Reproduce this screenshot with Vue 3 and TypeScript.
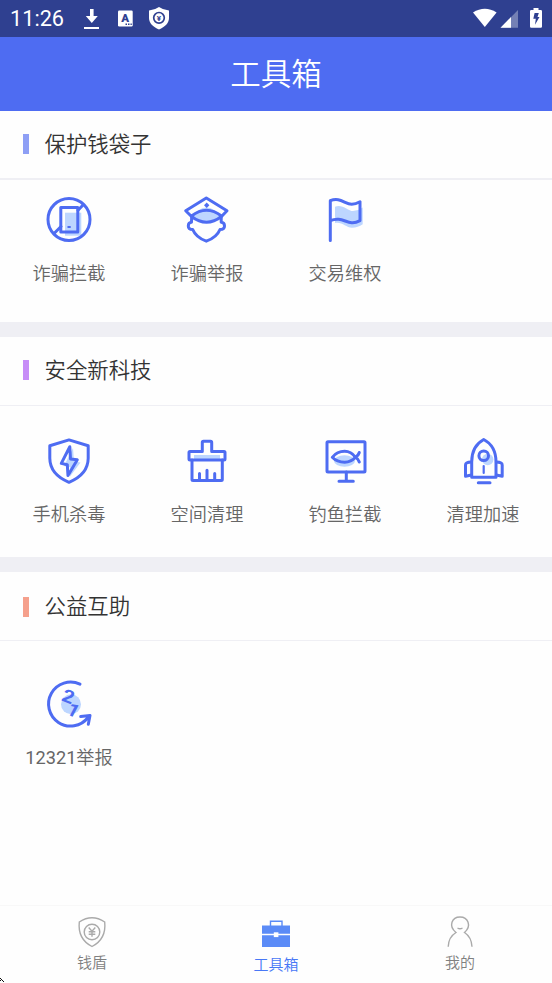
<script setup lang="ts">
interface Tool {
  icon: string
  label: string
  code?: string
}
interface Section {
  key: string
  title: string
  tools: Tool[]
}

const sections: Section[] = [
  {
    key: 'wallet',
    title: '保护钱袋子',
    tools: [
      { icon: 'block', label: '诈骗拦截' },
      { icon: 'police', label: '诈骗举报' },
      { icon: 'flag', label: '交易维权' },
    ],
  },
  {
    key: 'tech',
    title: '安全新科技',
    tools: [
      { icon: 'virus', label: '手机杀毒' },
      { icon: 'brush', label: '空间清理' },
      { icon: 'fish', label: '钓鱼拦截' },
      { icon: 'rocket', label: '清理加速' },
    ],
  },
  {
    key: 'public',
    title: '公益互助',
    tools: [{ icon: 'report', code: '12321', label: '举报' }],
  },
]
</script>

<template>
  <div class="screen">
    <div class="status">
      <span class="clock">11:26</span>
      <svg class="status-left" width="90" height="37" viewBox="80 0 90 37">
        <path d="M90 9h3.600v7h4.200l-6 7-6-7h4.200z" fill="#fff" />
        <rect x="84" y="27" width="15" height="2" fill="#fff" />
        <rect x="118" y="10.500" width="14.700" height="16" rx="1.200" fill="#fff" />
        <text x="125.200" y="22.300" text-anchor="middle" class="glyph" font-size="11.500" fill="#2f4090">A</text>
        <path d="M125.500 24.300h1.500m1 0h1.500m1 0h1.300" stroke="#2f4090" stroke-width="1.400" />
        <path d="M159 7Q163.500 10.200 169 10.600V18C169 23 165 27 159 29.400C153 27 149 23 149 18V10.600Q154.500 10.200 159 7z" fill="#fff" />
        <circle cx="159" cy="17.800" r="5.300" fill="#fff" stroke="#2f4090" stroke-width="1.700" />
        <text x="159" y="20.700" text-anchor="middle" class="glyph yen" font-size="8" fill="#2f4090">¥</text>
      </svg>
      <svg class="status-right" width="82" height="37" viewBox="470 0 82 37">
        <path d="M473 12.500Q484.800 5 496.600 12.500L484.800 27z" fill="#fff" />
        <path d="M518 10v17.800h-17.500z" fill="#7480b5" />
        <path d="M511 17.100v10.700h-10.500z" fill="#fff" />
        <path d="M533.500 8h5v2h2.300q1.200 0 1.200 1.200v15.400q0 1.200-1.200 1.200h-9.600q-1.200 0-1.200-1.200v-15.400q0-1.200 1.200-1.200h2.300z" fill="#fff" />
        <path d="M534.600 13h4.200l-1.300 3.900h2l-4.500 7.800.8-5.900h-2.500z" fill="#2f4090" />
      </svg>
    </div>

    <header class="header"><h1>工具箱</h1></header>

    <main>
      <section v-for="s in sections" :key="s.key" class="section" :class="s.key">
        <h2><i class="mark"></i><span>{{ s.title }}</span></h2>
        <div class="grid">
          <div v-for="t in s.tools" :key="t.icon" class="tool">
            <svg class="icon" viewBox="0 0 56 56">
              <g v-if="t.icon === 'block'">
                <rect class="tint" x="24" y="21.700" width="16.300" height="23" />
                <circle cx="28" cy="28.500" r="21" />
                <rect x="19.800" y="16.500" width="17" height="24.500" />
                <path d="M41.800 14.200L37 19.200M20 35.500L13.300 42.300" />
                <rect class="solid" x="26.500" y="35" width="3.200" height="2" />
              </g>
              <g v-else-if="t.icon === 'police'">
                <path class="tint" d="M13 25Q27.500 8 42 25Q27.500 36 13 25z" />
                <path d="M27.300 7L48 19.700L42.500 25.500Q27.500 37 12.500 25.500L6.700 19.700zM12.500 25Q27.500 13.500 42.500 25" />
                <path d="M12.700 25.500L12.500 31.300Q9.300 31.500 9.300 35Q9.300 38.500 13.700 38.500Q17 46.500 27.300 50.200Q37.700 46.500 41 38.500Q45.500 38.500 45.500 35Q45.500 31.500 42.200 31.300L42.200 25.500" />
                <path class="solid" d="M27.700 11.600L30.400 14.300L27.700 17L25 14.300z" />
              </g>
              <g v-else-if="t.icon === 'flag'">
                <path class="tint" d="M18 15.700C25 12.500 31 20 36 20Q41 20 45.700 16.500V33.300Q41 36.700 35 36.700C29 36.700 25 30.500 18 32z" />
                <path d="M13.300 49.500V9.700C23 5.500 28 13.300 34.700 13.300Q38.500 13.300 43 10.800V29.700Q38.500 32 34.700 31.700C28 31.300 23 25.500 13.300 29.700" />
              </g>
              <g v-else-if="t.icon === 'virus'">
                <path class="tint" d="M32 15L23 33l6 1v9.500L39.500 29.500l-6.500-1z" />
                <path d="M28 6.900L47.200 12.800V25.300Q47 41.500 28 49.300Q9 41.500 8.800 25.300V12.800z" />
                <path d="M28.800 13.800L20.300 30.400L26.300 31.700L27 42.600L36.300 26.800L29.500 26z" />
              </g>
              <g v-else-if="t.icon === 'brush'">
                <rect class="tint" x="15" y="22" width="26" height="4" />
                <path d="M23.300 18.500V9.500Q23.300 8.300 24.500 8.300H31.500Q32.700 8.300 32.700 9.500V18.500H45Q46 18.500 46 19.500V26Q46 27 45 27H11Q10 27 10 26V19.500Q10 18.500 11 18.500z" />
                <path d="M13 27V46.500Q13 47.500 14 47.500H42.300Q43.300 47.500 43.300 46.500V27M20.500 40.500V47M28 37.300V47M35.700 40.500V47" />
              </g>
              <g v-else-if="t.icon === 'fish'">
                <ellipse class="tint" cx="27.500" cy="28" rx="10.500" ry="5.800" />
                <rect x="10" y="8.700" width="38" height="30.300" rx="1" />
                <path d="M29.300 39V48M22 48.300H36.300M42.300 19.500Q41.500 22.500 38.500 24.300Q34 29.200 27.700 29.200Q20 29.200 15.300 24.300Q20 18.300 27.700 18.300Q34 18.300 38.500 24.300Q41.500 26 42.300 29" />
              </g>
              <g v-else-if="t.icon === 'rocket'">
                <circle class="tint" cx="32.700" cy="26.500" r="5.700" />
                <path d="M28.700 6.500Q41 13 41 29V44.300H16.700V29Q16.700 13 28.700 6.500zM23.300 49.700H35" />
                <path class="thin" d="M28.700 33V40" />
                <circle cx="28.700" cy="22.700" r="4.800" />
                <path d="M16.300 29Q10.500 29 10.500 32V43.300L16.500 42M41.300 29Q47.200 29 47.200 32V43.300L41.300 42" />
              </g>
              <g v-else>
                <circle class="tint" cx="30" cy="28.300" r="10" />
                <path d="M39 8.200A22 22 0 1 0 47 41.500M39.700 40.500L49 39.500L47.300 48.300" />
                <text class="digit" transform="translate(27.300 20.500) rotate(22) scale(1.150 1)" text-anchor="middle" y="6.200">2</text>
                <text class="digit" transform="translate(32.500 34.300) rotate(28) scale(1.150 1)" text-anchor="middle" y="6.200">1</text>
              </g>
            </svg>
            <span class="label"><b v-if="t.code">{{ t.code }}</b>{{ t.label }}</span>
          </div>
        </div>
      </section>
    </main>

    <nav class="tabs">
      <div class="tab">
        <svg width="40" height="40" viewBox="72 912 40 40">
          <path d="M92 917.700C96 917.700 101 919.500 104.700 922Q106.500 939 92 946.500Q77.500 939 79.300 922C83 919.500 88 917.700 92 917.700z" />
          <circle cx="92" cy="932" r="7.800" />
          <path d="M88.700 927.500L92 931.200L95.300 927.500M92 931.200V936.700M88.700 931.700H95.300M88.700 934.300H95.300" />
        </svg>
        <span>钱盾</span>
      </div>
      <div class="tab active">
        <svg width="40" height="40" viewBox="256 912 40 40">
          <path d="M270.500 926V921.300H282V926" />
          <path class="fill" d="M262 925.500h28v8.300h-28zM262 935.200h28v11.800h-28z" />
          <rect class="lock" x="273.800" y="932.300" width="4.600" height="4.800" />
        </svg>
        <span>工具箱</span>
      </div>
      <div class="tab">
        <svg width="40" height="40" viewBox="440 912 40 40">
          <path d="M448.200 946.800Q448.500 937 456 932.500C448 926 452 917 460 917S472 926 464.500 932.500Q471.500 937 472 946.800M457.500 928Q460 929.500 462.500 928" />
        </svg>
        <span>我的</span>
      </div>
      <svg class="cursor" width="5" height="6" viewBox="0 0 5 6"><path d="M0 1h1v1h-1zM1 2h1v1h-1zM2 3h1v1h-1zM0 3h1v1h-1zM3 4h1v1h-1z" fill="#111" /></svg>
    </nav>
  </div>
</template>

<style>
body {
  margin: 0;
  background: #fff;
}
</style>

<style scoped>
.screen {
  width: 552px;
  height: 983px;
  display: flex;
  flex-direction: column;
  overflow: hidden;
  background: #fefefe;
  font-family: Roboto, "Noto Sans CJK SC", sans-serif;
  font-weight: 350;
}
.status {
  height: 37px;
  flex: none;
  display: flex;
  background: #2f4090;
  color: #fff;
}
.clock {
  width: 70px;
  padding-left: 10px;
  font-size: 21.700px;
  line-height: 38px;
  font-weight: 400;
}
.status-right {
  margin-left: auto;
}
.glyph {
  font-family: Roboto, sans-serif;
  font-weight: 900;
}
.yen {
  font-weight: 700;
}
.header {
  height: 73.500px;
  flex: none;
  background: #4e6cf2;
  color: #fff;
  text-align: center;
}
h1 {
  margin: 0;
  font-size: 30.500px;
  line-height: 75px;
  font-weight: 350;
}
main {
  flex: 1;
}
.section {
  box-sizing: border-box;
  height: 226px;
  border-bottom: 15.500px solid #efeff4;
}
.tech {
  height: 235px;
}
.public {
  border-bottom: 0;
}
h2 {
  box-sizing: border-box;
  height: 69px;
  margin: 0;
  padding-left: 23px;
  display: flex;
  align-items: center;
  border-bottom: 2px solid #efeff4;
  color: #333;
  font-size: 21.400px;
  font-weight: 350;
  line-height: 32px;
}
.wallet h2 span {
  padding-top: 2px;
}
.tech h2,
.public h2 {
  border-bottom-width: 1px;
}
.tech .mark {
  margin-bottom: 1px;
}
.public h2 {
  padding-top: 2px;
}
.mark {
  width: 6px;
  height: 20px;
  margin-right: 15.500px;
  background: #8e9ff5;
}
.tech .mark {
  background: #c78df7;
}
.public .mark {
  background: #f5a08c;
}
.grid {
  display: grid;
  grid-template-columns: repeat(4, 138px);
  padding-top: 11.500px;
}
.tech .grid {
  padding-top: 27.500px;
}
.public .grid {
  padding-top: 35.500px;
}
.tool {
  display: flex;
  flex-direction: column;
  align-items: center;
  color: #666;
  font-size: 18.200px;
  line-height: 28px;
}
.label {
  margin-top: 12.500px;
}
.tech .label {
  margin-top: 12px;
}
.public .label {
  margin-top: 11.500px;
}
.label b {
  font-weight: 400;
}
.icon {
  width: 56px;
  height: 56px;
  fill: none;
  stroke: #4e6cf2;
  stroke-width: 3;
  stroke-linecap: round;
  stroke-linejoin: round;
}
.icon .tint {
  fill: #bdd6ff;
  stroke: none;
}
.icon .solid {
  fill: #4e6cf2;
  stroke: none;
}
.icon .thin {
  stroke-width: 2.200;
}
.digit {
  fill: #4e6cf2;
  stroke: none;
  font-family: Roboto, sans-serif;
  font-size: 18px;
  font-weight: 700;
}
.tabs {
  position: relative;
  height: 77px;
  flex: none;
  display: grid;
  grid-template-columns: repeat(3, 1fr);
  border-top: 1px solid #f8f8f8;
}
.tab {
  display: flex;
  flex-direction: column;
  align-items: center;
  padding-top: 6px;
  color: #808080;
  font-size: 15px;
  line-height: 22px;
}
.tab svg {
  fill: none;
  stroke: #aaa;
  stroke-width: 1.400;
}
.tab.active {
  color: #4878f6;
}
.tab.active svg {
  stroke: #5b8bf7;
}
.tab .fill {
  fill: #5b8bf7;
  stroke: none;
}
.tab .lock {
  fill: #fff;
  stroke: none;
}
.tab.active span {
  margin-top: 2px;
}
.tabs .cursor {
  position: absolute;
  left: 0;
  bottom: 0;
}
</style>
